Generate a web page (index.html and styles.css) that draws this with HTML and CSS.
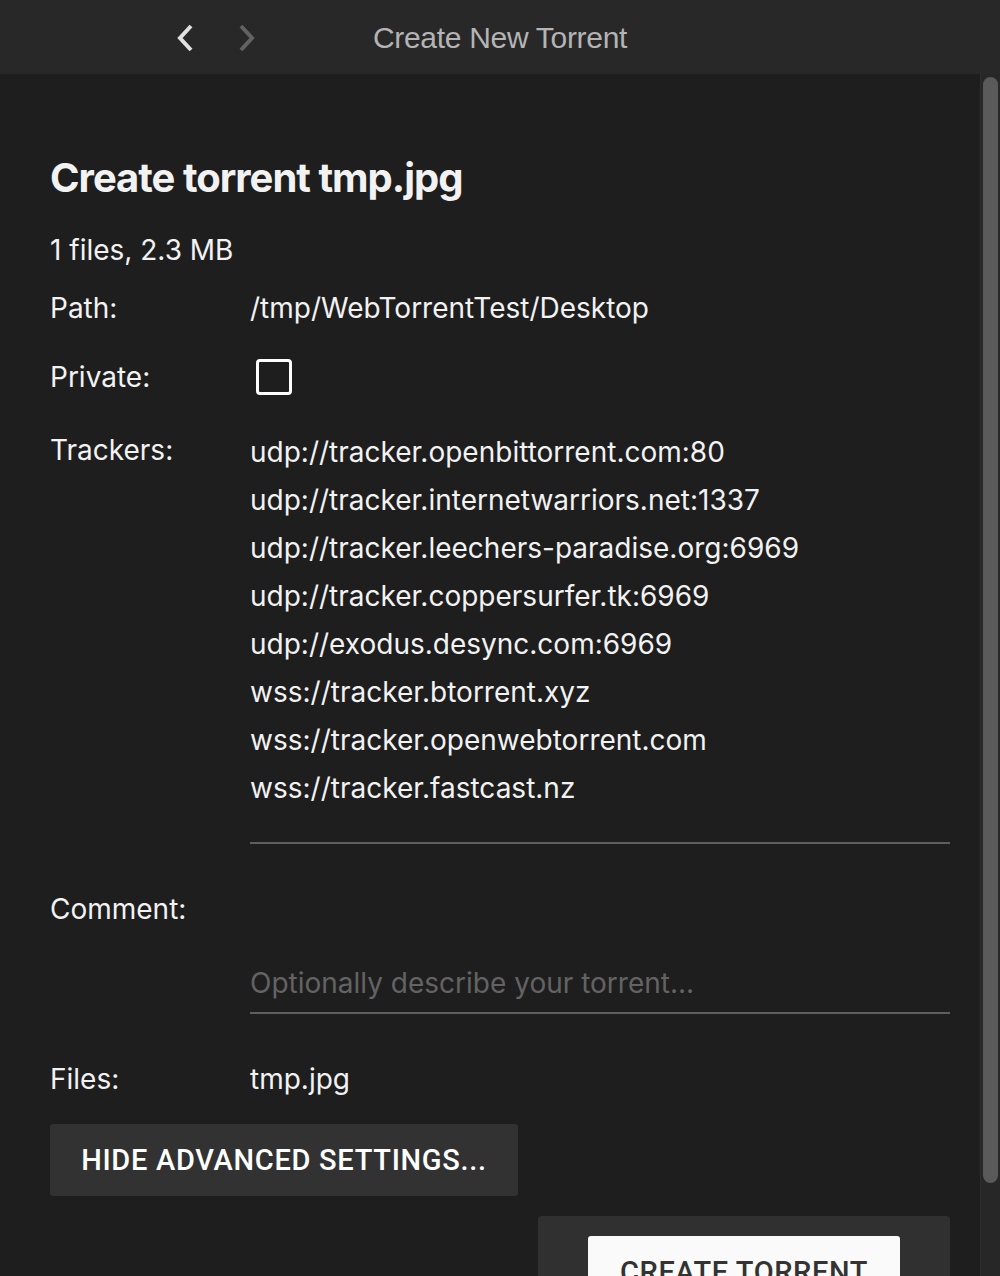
FILE: index.html
```html
<!DOCTYPE html>
<html lang="en">
<head>
    <meta charset="UTF-8">
    <meta name="viewport" content="width=device-width, initial-scale=1.0">
    <title>Create New Torrent</title>
    <link rel="stylesheet" href="styles.css">
</head>
<body>
    <!-- Title bar with history arrows -->
    <header class="title-bar">
        <div class="nav-arrows">
            <svg class="nav-arrow back" width="20" height="30" viewBox="0 0 20 30">
                <path d="M16 3 L5 15 L16 27" fill="none" stroke="currentColor" stroke-width="4"/>
            </svg>
            <svg class="nav-arrow forward" width="20" height="30" viewBox="0 0 20 30">
                <path d="M4 3 L15 15 L4 27" fill="none" stroke="currentColor" stroke-width="4"/>
            </svg>
        </div>
        <div class="title-text">Create New Torrent</div>
    </header>

    <div class="main">
        <div class="content">
            <h1 class="page-title">Create torrent tmp.jpg</h1>
            <div class="summary">1 files, 2.3 MB</div>

            <div class="row path-row">
                <div class="label">Path:</div>
                <div class="value">/tmp/WebTorrentTest/Desktop</div>
            </div>

            <div class="row private-row">
                <div class="label">Private:</div>
                <div class="value"><span class="checkbox"></span></div>
            </div>

            <div class="row trackers-row">
                <div class="label">Trackers:</div>
                <div class="value field">
                    <div>udp://tracker.openbittorrent.com:80</div>
                    <div>udp://tracker.internetwarriors.net:1337</div>
                    <div>udp://tracker.leechers-paradise.org:6969</div>
                    <div>udp://tracker.coppersurfer.tk:6969</div>
                    <div>udp://exodus.desync.com:6969</div>
                    <div>wss://tracker.btorrent.xyz</div>
                    <div>wss://tracker.openwebtorrent.com</div>
                    <div>wss://tracker.fastcast.nz</div>
                </div>
            </div>

            <div class="row comment-row">
                <div class="label">Comment:</div>
                <div class="value field comment-field">
                    <span class="placeholder">Optionally describe your torrent...</span>
                </div>
            </div>

            <div class="row files-row">
                <div class="label">Files:</div>
                <div class="value">tmp.jpg</div>
            </div>

            <button class="btn-flat">Hide advanced settings...</button>

            <div class="actions">
                <button class="btn-raised">Create torrent</button>
            </div>
        </div>
        <div class="scroll-track"><div class="scroll-thumb"></div></div>
    </div>
</body>
</html>
```

FILE: styles.css
```css
html, body {
    margin: 0;
    padding: 0;
    height: 100%;
}

body {
    background: #1e1e1e;
    color: #f2f2f2;
    font-family: Inter, "Noto Sans", sans-serif;
    display: flex;
    flex-direction: column;
    overflow: hidden;
}

.title-bar {
    height: 74px;
    flex-shrink: 0;
    background: #282828;
    position: relative;
    display: flex;
    align-items: center;
    justify-content: center;
}

.nav-arrows {
    position: absolute;
    left: 175px;
    top: 23px;
    display: flex;
    gap: 42px;
}

.nav-arrow.back {
    color: #e0e0e0;
}

.nav-arrow.forward {
    color: #626262;
}

.title-text {
    font-family: "Liberation Sans", Arial, sans-serif;
    font-size: 30px;
    color: #b4b4b4;
    letter-spacing: -0.3px;
    margin-top: 2px;
}

.main {
    flex: 1;
    display: flex;
    min-height: 0;
}

.content {
    flex: 1;
    padding: 82px 30px 0 50px;
    font-size: 28px;
}

.page-title {
    margin: 0;
    font-size: 40px;
    line-height: 44px;
    font-weight: 700;
    letter-spacing: -1px;
}

.summary {
    margin-top: 32px;
    line-height: 36px;
}

.row {
    display: flex;
    line-height: 36px;
}

.label {
    width: 200px;
    flex-shrink: 0;
}

.value {
    flex: 1;
}

.path-row {
    margin-top: 22px;
}

.private-row {
    margin-top: 33px;
}

.checkbox {
    display: block;
    width: 30px;
    height: 30px;
    margin: 0 0 0 6px;
    border: 3px solid #fff;
    border-radius: 4px;
}

.trackers-row {
    margin-top: 33px;
}

.trackers-row .label {
    line-height: 44px;
}

.field {
    border-bottom: 2px solid #5e5e5e;
}

.trackers-row .field {
    line-height: 48px;
    padding-bottom: 30px;
}

.comment-row {
    margin-top: 47px;
}

.comment-field {
    padding-top: 74px;
    padding-bottom: 11px;
}

.placeholder {
    color: #636363;
}

.files-row {
    margin-top: 47px;
}

.btn-flat {
    display: block;
    margin-top: 27px;
    width: 468px;
    height: 72px;
    background: #323232;
    color: #fff;
    border: none;
    border-radius: 3px;
    font-family: Roboto, sans-serif;
    font-size: 29px;
    font-weight: 500;
    text-transform: uppercase;
    letter-spacing: 0.7px;
}

.actions {
    margin-top: 20px;
    margin-left: auto;
    width: 412px;
    height: 80px;
    background: #303030;
    border-radius: 4px 4px 0 0;
    padding: 20px 50px 0;
    box-sizing: border-box;
}

.btn-raised {
    display: block;
    width: 312px;
    height: 72px;
    background: #fafafa;
    color: #333;
    border: none;
    border-radius: 3px;
    font-family: Roboto, sans-serif;
    font-size: 29px;
    font-weight: 500;
    text-transform: uppercase;
    letter-spacing: 0.6px;
}

.scroll-track {
    width: 20px;
    flex-shrink: 0;
    background: #272727;
    border-left: 1px solid #2e2e2e;
    box-sizing: border-box;
    padding: 3px 2px 0 2px;
}

.scroll-thumb {
    height: 1106px;
    background: #5a5a5a;
    border-radius: 8px;
}
```
